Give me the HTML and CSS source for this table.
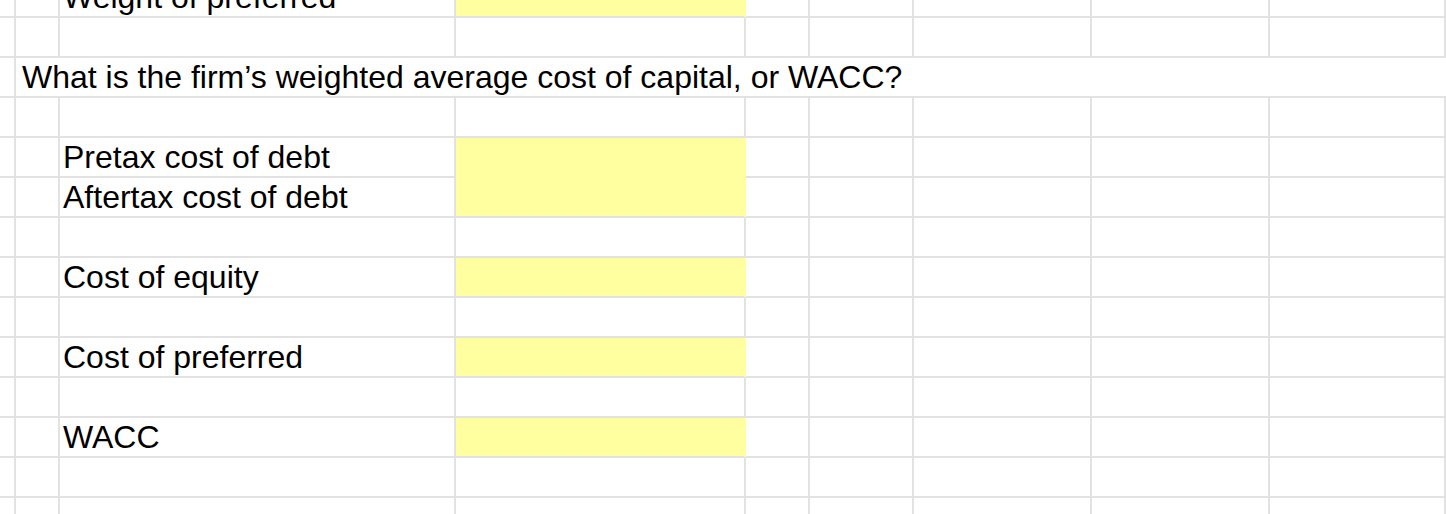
FILE: index.html
```html
<!DOCTYPE html>
<html>
<head>
<meta charset="utf-8">
<link rel="stylesheet" href="styles.css">
</head>
<body>
<div class="sheet">
  <!-- row 0 (partially visible) -->
  <div class="c"></div><div class="c"></div><div class="c t"><span>Weight of preferred</span></div><div class="c y"></div><div class="c"></div><div class="c"></div><div class="c"></div><div class="c"></div><div class="c"></div>
  <!-- row 1 -->
  <div class="c"></div><div class="c"></div><div class="c"></div><div class="c"></div><div class="c"></div><div class="c"></div><div class="c"></div><div class="c"></div><div class="c"></div>
  <!-- row 2 question -->
  <div class="c"></div><div class="c t q wide"><span>What is the firm’s weighted average cost of capital, or WACC?</span></div>
  <!-- row 3 -->
  <div class="c"></div><div class="c"></div><div class="c"></div><div class="c"></div><div class="c"></div><div class="c"></div><div class="c"></div><div class="c"></div><div class="c"></div>
  <!-- row 4 -->
  <div class="c"></div><div class="c"></div><div class="c t"><span>Pretax cost of debt</span></div><div class="c y tall"></div><div class="c"></div><div class="c"></div><div class="c"></div><div class="c"></div><div class="c"></div>
  <!-- row 5 -->
  <div class="c"></div><div class="c"></div><div class="c t"><span>Aftertax cost of debt</span></div><div class="c"></div><div class="c"></div><div class="c"></div><div class="c"></div><div class="c"></div>
  <!-- row 6 -->
  <div class="c"></div><div class="c"></div><div class="c"></div><div class="c"></div><div class="c"></div><div class="c"></div><div class="c"></div><div class="c"></div><div class="c"></div>
  <!-- row 7 -->
  <div class="c"></div><div class="c"></div><div class="c t"><span>Cost of equity</span></div><div class="c y"></div><div class="c"></div><div class="c"></div><div class="c"></div><div class="c"></div><div class="c"></div>
  <!-- row 8 -->
  <div class="c"></div><div class="c"></div><div class="c"></div><div class="c"></div><div class="c"></div><div class="c"></div><div class="c"></div><div class="c"></div><div class="c"></div>
  <!-- row 9 -->
  <div class="c"></div><div class="c"></div><div class="c t"><span>Cost of preferred</span></div><div class="c y"></div><div class="c"></div><div class="c"></div><div class="c"></div><div class="c"></div><div class="c"></div>
  <!-- row 10 -->
  <div class="c"></div><div class="c"></div><div class="c"></div><div class="c"></div><div class="c"></div><div class="c"></div><div class="c"></div><div class="c"></div><div class="c"></div>
  <!-- row 11 -->
  <div class="c"></div><div class="c"></div><div class="c t"><span>WACC</span></div><div class="c y"></div><div class="c"></div><div class="c"></div><div class="c"></div><div class="c"></div><div class="c"></div>
  <!-- row 12 -->
  <div class="c"></div><div class="c"></div><div class="c"></div><div class="c"></div><div class="c"></div><div class="c"></div><div class="c"></div><div class="c"></div><div class="c"></div>
  <!-- row 13 -->
  <div class="c"></div><div class="c"></div><div class="c"></div><div class="c"></div><div class="c"></div><div class="c"></div><div class="c"></div><div class="c"></div><div class="c"></div>
</div>
</body>
</html>
```

FILE: styles.css
```css
html, body {
  margin: 0;
  padding: 0;
  background: #ffffff;
  overflow: hidden;
}
.sheet {
  width: 1446px;
  height: 514px;
  overflow: hidden;
  display: grid;
  grid-template-columns: 16px 44px 396px 290px 64px 104px 178px 178px 1fr;
  grid-template-rows: 18px repeat(13, 40px);
  font-family: "Liberation Sans", Arial, Helvetica, sans-serif;
  font-size: 32px;
  color: #000000;
}
.c {
  box-sizing: border-box;
  border-right: 2px solid #e2e2e2;
  border-bottom: 2px solid #e2e2e2;
  min-width: 0;
  min-height: 0;
}
.t {
  display: flex;
  align-items: flex-end;
  padding: 0 0 3px 3px;
  line-height: 1;
  white-space: nowrap;
  overflow: visible;
}
.q {
  padding-left: 6px;
}
.wide {
  grid-column: 2 / -1;
  border-right: none;
}
.y {
  background: #ffff9f;
  border-right-color: #ffff9f;
}
.tall {
  grid-row: span 2;
}
```
